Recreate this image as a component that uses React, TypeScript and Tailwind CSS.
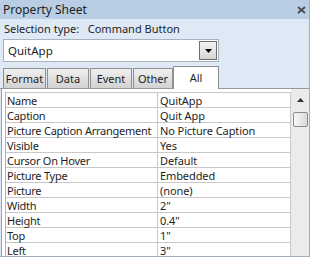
const rows: [string, string][] = [
  ["Name", "QuitApp"],
  ["Caption", "Quit App"],
  ["Picture Caption Arrangement", "No Picture Caption"],
  ["Visible", "Yes"],
  ["Cursor On Hover", "Default"],
  ["Picture Type", "Embedded"],
  ["Picture", "(none)"],
  ["Width", "2\""],
  ["Height", "0.4\""],
  ["Top", "1\""],
  ["Left", "3\""],
];

const tabs: [string, string][] = [
  ["Format", "w-[43px]"],
  ["Data", "w-[42px]"],
  ["Event", "w-[42px]"],
  ["Other", "w-[40px]"],
];

export default function App() {
  return (
    <div
      className="w-[310px] h-[257px] overflow-hidden bg-[#dfe9f5] border-r border-b border-[#a3afbd] flex flex-col text-[11px] text-[#1e1e1e]"
      style={{ fontFamily: '"Noto Sans", "Open Sans", sans-serif' }}
    >
      {/* Title bar */}
      <div className="h-[19px] shrink-0 bg-[#b9cde5] flex items-center justify-between pl-[3px] pr-[3px]">
        <span className="text-[12px] leading-none">Property Sheet</span>
        <svg width="9" height="8" viewBox="0 0 9 8">
          <path d="M1 1 L8 7 M8 1 L1 7" stroke="#4a4a4a" strokeWidth="1.8" />
        </svg>
      </div>

      {/* Selection type */}
      <div className="h-[18px] shrink-0 flex items-center pl-[4px] leading-none">
        Selection type:&nbsp;&nbsp;&nbsp;Command Button
      </div>

      {/* Combo */}
      <div className="mt-[2px] ml-[3px] w-[216px] h-[23px] shrink-0 bg-white border border-[#a9b3bf] flex items-center justify-between pl-[4px] pr-[1px]">
        <span className="text-[11.5px] leading-none">QuitApp</span>
        <div className="w-[18px] h-[19px] border border-[#6f6f6f] bg-gradient-to-b from-[#f4f4f4] to-[#d6d6d6] flex items-center justify-center">
          <svg width="7" height="4" viewBox="0 0 7 4">
            <path d="M0 0 H7 L3.5 4 Z" fill="#000" />
          </svg>
        </div>
      </div>

      {/* Tabs */}
      <div className="mt-[4px] h-[23px] shrink-0 flex items-end pl-[3px] gap-[1px] border-b border-[#9a9a9a]">
        {tabs.map(([t, w]) => (
          <div
            key={t}
            className={`${w} h-[20px] flex items-center justify-center border border-b-0 border-[#8f8f8f] bg-gradient-to-b from-[#f0f0f0] to-[#d2d2d2] leading-none`}
          >
            {t}
          </div>
        ))}
        <div className="h-[23px] w-[46px] -ml-[1px] -mb-[1px] flex items-start justify-center pt-[5px] border border-b-0 border-[#8f8f8f] bg-white leading-none">
          All
        </div>
      </div>

      {/* Grid */}
      <div className="flex-1 min-h-0 bg-white ml-[1px] border-l border-[#a0a0a0] flex pt-[3px]">
        <div className="ml-[3px] border-l border-[#b4b4b4]">
          {rows.map(([k, v]) => (
            <div key={k} className="h-[15px] flex border-t border-[#c8c8c8] leading-none">
              <div className="w-[151px] pl-[1px] flex items-center whitespace-nowrap tracking-[-0.25px]">{k}</div>
              <div className="w-[134px] border-l border-r border-[#c8c8c8] pl-[2px] flex items-center whitespace-nowrap tracking-[-0.1px]">{v}</div>
            </div>
          ))}
        </div>
        {/* Scrollbar */}
        <div className="flex-1 bg-[#ebebeb] -mt-[3px] flex flex-col items-center pt-[9px]">
          <svg width="7" height="4" viewBox="0 0 7 4">
            <path d="M3.5 0 L7 4 H0 Z" fill="#333" />
          </svg>
          <div className="mt-[10px] w-[15px] h-[15px] border border-[#8a8a8a] rounded-[2px] bg-gradient-to-r from-[#f6f6f6] to-[#dadada]" />
        </div>
      </div>
    </div>
  );
}
